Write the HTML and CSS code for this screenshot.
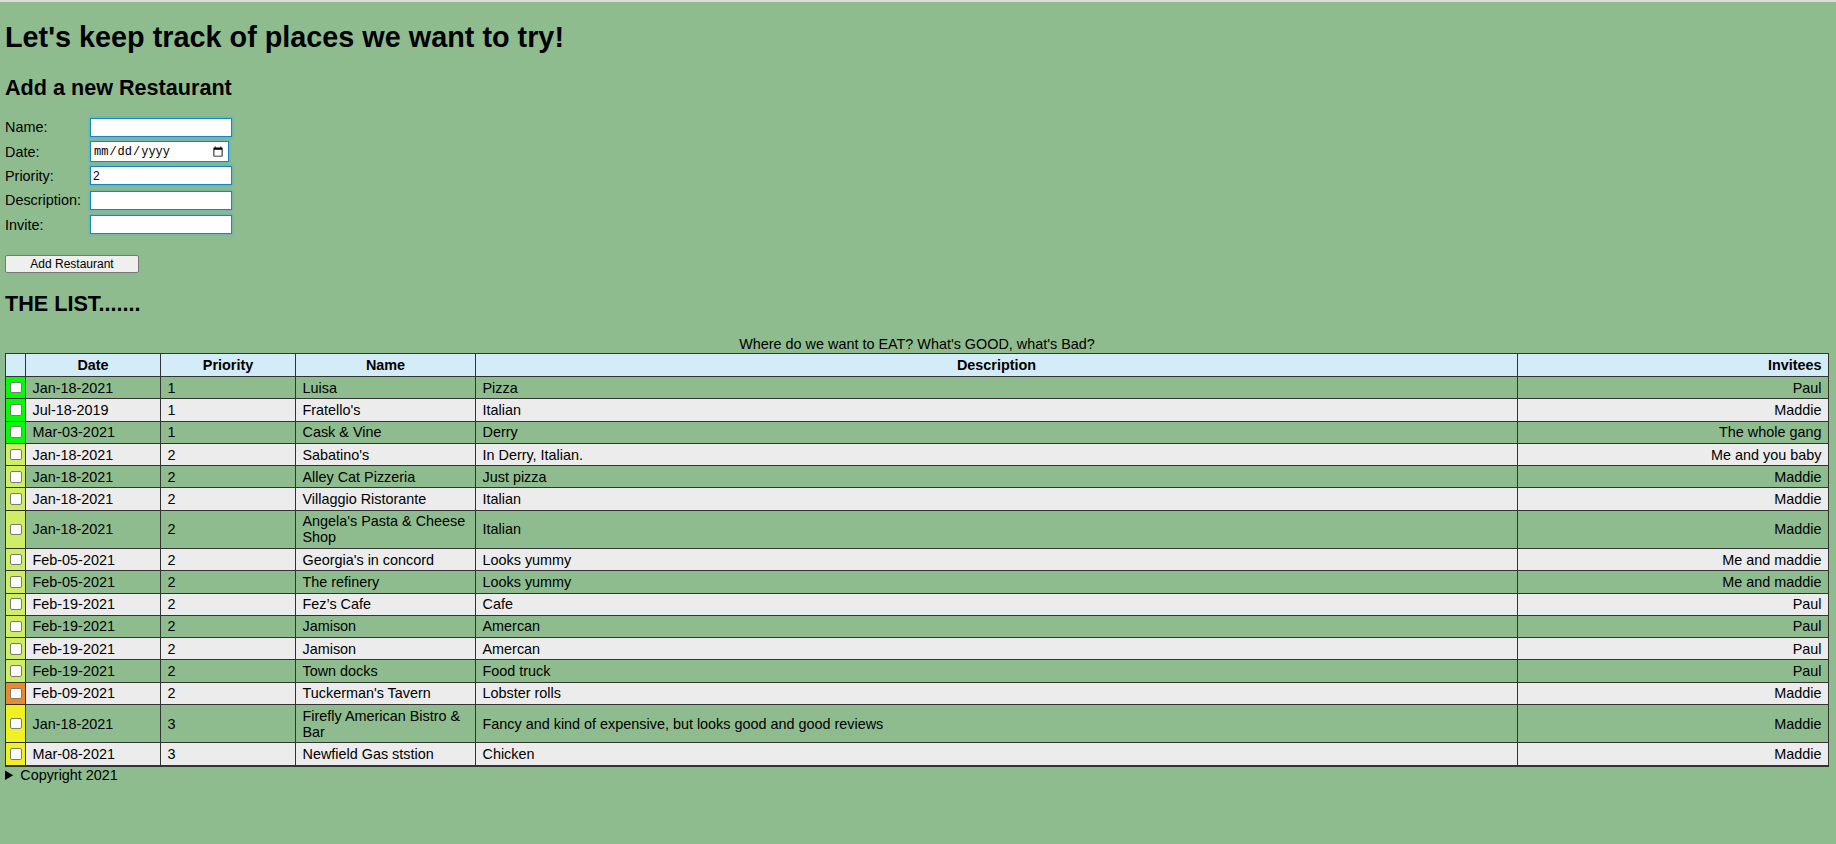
FILE: index.html
```html
<!DOCTYPE html>
<html lang="en">
<head>
<meta charset="utf-8">
<title>Restaurants</title>
<link rel="stylesheet" href="styles.css">
</head>
<body>
<h1 class="page-title">Let's keep track of places we want to try!</h1>
<h2 class="section-title form-title">Add a new Restaurant</h2>
<form class="add-form">
  <div class="form-grid">
    <label class="form-label" for="name">Name:</label>
    <input class="text-input" id="name" type="text">
    <label class="form-label" for="date">Date:</label>
    <input class="date-input" id="date" type="date">
    <label class="form-label" for="priority">Priority:</label>
    <input class="text-input" id="priority" type="text" value="2">
    <label class="form-label" for="desc">Description:</label>
    <input class="text-input" id="desc" type="text">
    <label class="form-label" for="invite">Invite:</label>
    <input class="text-input" id="invite" type="text">
  </div>
  <div class="form-actions">
    <button class="add-button" type="button">Add Restaurant</button>
  </div>
</form>
<h2 class="section-title list-title">THE LIST.......</h2>
<table class="places">
  <caption class="places-caption">Where do we want to EAT? What's GOOD, what's Bad?</caption>
  <colgroup>
    <col class="col-check">
    <col class="col-date">
    <col class="col-priority">
    <col class="col-name">
    <col class="col-desc">
    <col class="col-invite">
  </colgroup>
  <thead>
    <tr class="head-row">
      <th class="cell-head"></th>
      <th class="cell-head">Date</th>
      <th class="cell-head">Priority</th>
      <th class="cell-head">Name</th>
      <th class="cell-head">Description</th>
      <th class="cell-head head-right">Invitees</th>
    </tr>
  </thead>
  <tbody>
    <tr class="row"><td class="check p1"><input class="done" type="checkbox"></td><td class="cell">Jan-18-2021</td><td class="cell">1</td><td class="cell">Luisa</td><td class="cell">Pizza</td><td class="cell right">Paul</td></tr>
    <tr class="row"><td class="check p1"><input class="done" type="checkbox"></td><td class="cell">Jul-18-2019</td><td class="cell">1</td><td class="cell">Fratello's</td><td class="cell">Italian</td><td class="cell right">Maddie</td></tr>
    <tr class="row"><td class="check p1"><input class="done" type="checkbox"></td><td class="cell">Mar-03-2021</td><td class="cell">1</td><td class="cell">Cask &amp; Vine</td><td class="cell">Derry</td><td class="cell right">The whole gang</td></tr>
    <tr class="row"><td class="check p2"><input class="done" type="checkbox"></td><td class="cell">Jan-18-2021</td><td class="cell">2</td><td class="cell">Sabatino's</td><td class="cell">In Derry, Italian.</td><td class="cell right">Me and you baby</td></tr>
    <tr class="row"><td class="check p2"><input class="done" type="checkbox"></td><td class="cell">Jan-18-2021</td><td class="cell">2</td><td class="cell">Alley Cat Pizzeria</td><td class="cell">Just pizza</td><td class="cell right">Maddie</td></tr>
    <tr class="row"><td class="check p2"><input class="done" type="checkbox"></td><td class="cell">Jan-18-2021</td><td class="cell">2</td><td class="cell">Villaggio Ristorante</td><td class="cell">Italian</td><td class="cell right">Maddie</td></tr>
    <tr class="row"><td class="check p2"><input class="done" type="checkbox"></td><td class="cell">Jan-18-2021</td><td class="cell">2</td><td class="cell">Angela's Pasta &amp; Cheese Shop</td><td class="cell">Italian</td><td class="cell right">Maddie</td></tr>
    <tr class="row"><td class="check p2"><input class="done" type="checkbox"></td><td class="cell">Feb-05-2021</td><td class="cell">2</td><td class="cell">Georgia's in concord</td><td class="cell">Looks yummy</td><td class="cell right">Me and maddie</td></tr>
    <tr class="row"><td class="check p2"><input class="done" type="checkbox"></td><td class="cell">Feb-05-2021</td><td class="cell">2</td><td class="cell">The refinery</td><td class="cell">Looks yummy</td><td class="cell right">Me and maddie</td></tr>
    <tr class="row"><td class="check p2"><input class="done" type="checkbox"></td><td class="cell">Feb-19-2021</td><td class="cell">2</td><td class="cell">Fez’s Cafe</td><td class="cell">Cafe</td><td class="cell right">Paul</td></tr>
    <tr class="row"><td class="check p2"><input class="done" type="checkbox"></td><td class="cell">Feb-19-2021</td><td class="cell">2</td><td class="cell">Jamison</td><td class="cell">Amercan</td><td class="cell right">Paul</td></tr>
    <tr class="row"><td class="check p2"><input class="done" type="checkbox"></td><td class="cell">Feb-19-2021</td><td class="cell">2</td><td class="cell">Jamison</td><td class="cell">Amercan</td><td class="cell right">Paul</td></tr>
    <tr class="row"><td class="check p2"><input class="done" type="checkbox"></td><td class="cell">Feb-19-2021</td><td class="cell">2</td><td class="cell">Town docks</td><td class="cell">Food truck</td><td class="cell right">Paul</td></tr>
    <tr class="row"><td class="check p-late"><input class="done" type="checkbox"></td><td class="cell">Feb-09-2021</td><td class="cell">2</td><td class="cell">Tuckerman's Tavern</td><td class="cell">Lobster rolls</td><td class="cell right">Maddie</td></tr>
    <tr class="row"><td class="check p3"><input class="done" type="checkbox"></td><td class="cell">Jan-18-2021</td><td class="cell">3</td><td class="cell">Firefly American Bistro &amp; Bar</td><td class="cell">Fancy and kind of expensive, but looks good and good reviews</td><td class="cell right">Maddie</td></tr>
    <tr class="row"><td class="check p3"><input class="done" type="checkbox"></td><td class="cell">Mar-08-2021</td><td class="cell">3</td><td class="cell">Newfield Gas ststion</td><td class="cell">Chicken</td><td class="cell right">Maddie</td></tr>
  </tbody>
</table>
<details class="footer">
  <summary class="footer-summary">Copyright 2021</summary>
</details>
</body>
</html>
```

FILE: styles.css
```css
html {
  border-top: 2px solid #dcdcdc;
  background: #8fbc8f;
}

body {
  margin: 0 7px 0 5px;
  font-family: "Liberation Sans", Arial, sans-serif;
  font-size: 14.4px;
  color: #000;
  background: #8fbc8f;
}

.page-title {
  font-size: 28.8px;
  font-weight: 700;
  margin: 19.3px 0 20.5px;
}

.section-title {
  font-size: 21.6px;
  font-weight: 700;
  margin: 17.9px 0;
}

.form-title {
  margin-bottom: 14.4px;
}

.list-title {
  margin-top: 17.8px;
  margin-bottom: 19.1px;
}

.add-form {
  margin: 0;
}

.form-grid {
  display: grid;
  grid-template-columns: 85px auto;
  grid-auto-rows: 24.3px;
  align-items: center;
  justify-items: start;
}

.form-label {
  font-size: 14.4px;
}

.text-input,
.date-input {
  box-sizing: border-box;
  margin: 0;
  background: #fff;
  border: 1px solid #1486c6;
  box-shadow: 0 0 2px 1px rgba(60, 170, 225, 0.45);
  outline: none;
  color: #000;
}

.text-input {
  width: 142px;
  height: 19px;
  padding: 1px 2px;
  font: 12px "Liberation Sans", Arial, sans-serif;
}

.date-input {
  width: 139px;
  height: 21px;
  padding: 1px 2px;
  font-family: "Liberation Mono", monospace;
  font-size: 12px;
}

.form-actions {
  margin-top: 18.6px;
}

.add-button {
  box-sizing: border-box;
  width: 134px;
  height: 18px;
  margin: 0;
  padding: 0 6px;
  background: #efefef;
  border: 1px solid #767676;
  border-radius: 2px;
  font: 12px "Liberation Sans", Arial, sans-serif;
  color: #000;
}

.places {
  width: 100%;
  table-layout: fixed;
  border-collapse: collapse;
  border: 1px solid #333;
  border-bottom-width: 2px;
}

.places-caption {
  text-align: center;
  line-height: 16.5px;
}

.col-check { width: 20px; }
.col-date { width: 135px; }
.col-priority { width: 135px; }
.col-name { width: 180px; }
.col-desc { width: 1042px; }

.head-row {
  background: #d4ecf8;
}

.cell-head {
  border: 1px solid #333;
  padding: 3.2px 6.5px;
  line-height: 16px;
  font-weight: 700;
  text-align: center;
}

.head-right {
  text-align: right;
}

.row:nth-child(even) {
  background: #ececec;
}

.cell {
  border: 1px solid #333;
  padding: 2.65px 6.5px;
  line-height: 16px;
  text-align: left;
  vertical-align: middle;
}

.right {
  text-align: right;
}

.check {
  border: 1px solid #333;
  padding: 0;
  text-align: center;
  vertical-align: middle;
  line-height: 0;
}

.p1 { background: #00ff00; }
.p2 { background: #cfee66; }
.p-late { background: #e88a2e; }
.p3 { background: #f0f022; }

.done {
  -webkit-appearance: none;
  appearance: none;
  box-sizing: border-box;
  width: 11.5px;
  height: 11.5px;
  margin: 0 0 0 1px;
  background: #fff;
  border: 1px solid #7a7a7a;
  border-radius: 2px;
  vertical-align: middle;
}

.footer {
  margin: 0;
}

.footer-summary {
  line-height: 16.5px;
  cursor: pointer;
}
```
